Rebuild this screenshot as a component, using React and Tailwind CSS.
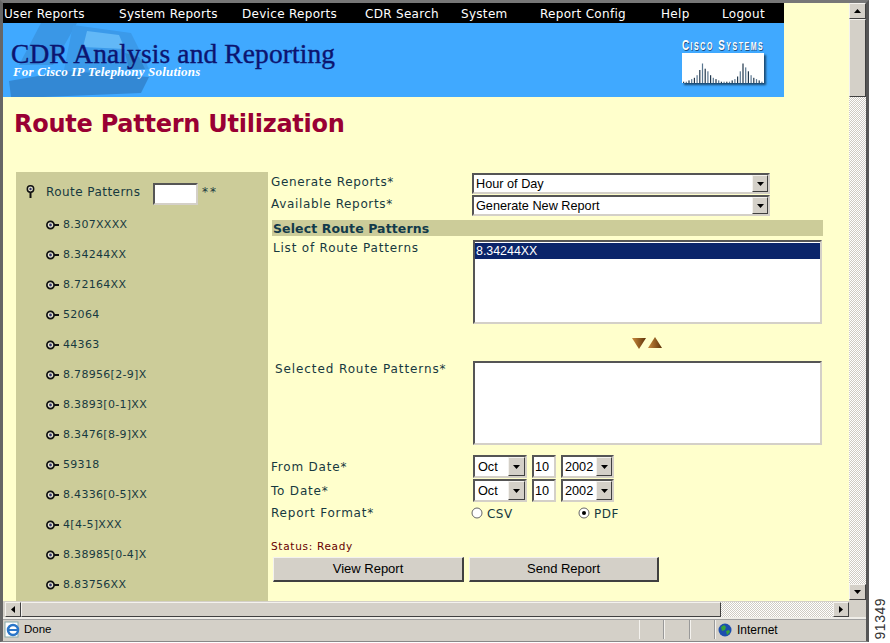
import React from "react";

const navItems = [
  ["User Reports", "w-[115px]"],
  ["System Reports", "w-[123px]"],
  ["Device Reports", "w-[123px]"],
  ["CDR Search", "w-[96px]"],
  ["System", "w-[79px]"],
  ["Report Config", "w-[121px]"],
  ["Help", "w-[61px]"],
  ["Logout", "w-[62px]"],
];

const patterns = ["8.307XXXX","8.34244XX","8.72164XX","52064","44363","8.78956[2-9]X","8.3893[0-1]XX","8.3476[8-9]XX","59318","8.4336[0-5]XX","4[4-5]XXX","8.38985[0-4]X","8.83756XX"];

const verdana = "font-['DejaVu_Sans',sans-serif]";
const arial = "font-['Liberation_Sans',Arial,sans-serif]";
const edge = "border border-t-[#f4f2ee] border-l-[#f4f2ee] border-r-[#404040] border-b-[#404040]";
const sunken = "border-2 border-t-[#555] border-l-[#555] border-r-[#d4d0c8] border-b-[#d4d0c8]";
const dither = "bg-[repeating-conic-gradient(#cfcbc3_0_25%,#ffffff_0_50%)] bg-[length:2px_2px]";

function Tri({ dir = "down", size = 7 }) {
  const pts = { down: "0,0 7,0 3.5,4", up: "0,4 7,4 3.5,0", left: "4,0 4,7 0,3.5", right: "0,0 0,7 4,3.5" }[dir];
  const box = dir === "left" || dir === "right" ? "0 0 4 7" : "0 0 7 4";
  const w = dir === "left" || dir === "right" ? 4 : size;
  const h = dir === "left" || dir === "right" ? size : 4;
  return <svg width={w} height={h} viewBox={box}><polygon points={pts} fill="#000" /></svg>;
}

function WinBtn({ dir, className = "" }) {
  return (
    <div className={`${edge} bg-[#d4d0c8] flex items-center justify-center shrink-0 ${className}`}>
      <Tri dir={dir} />
    </div>
  );
}

function Select({ value, className = "", btn = "w-[16px]" }) {
  return (
    <div className={`${sunken} bg-white flex items-stretch ${className}`}>
      <div className={`flex-1 ${arial} text-[12.7px] leading-none text-black pl-[2px] pt-[2px] flex items-center`}>{value}</div>
      <WinBtn dir="down" className={btn} />
    </div>
  );
}

function KeyIcon() {
  return (
    <svg width="13" height="10" viewBox="0 0 13 10" className="shrink-0">
      <circle cx="4.5" cy="5" r="3.6" fill="#e8e8d0" stroke="#111" strokeWidth="1.7" />
      <circle cx="4.5" cy="5" r="1.4" fill="#333366" />
      <rect x="8" y="4" width="5" height="2" fill="#111" />
    </svg>
  );
}

function Label({ children, className = "", track = "tracking-[0.8px]" }) {
  return <div className={`${verdana} text-[12px] leading-[14px] ${track} text-[#17393f] whitespace-nowrap ${className}`}>{children}</div>;
}

function Phone() {
  return (
    <svg className="absolute left-0 top-0" width="160" height="74" viewBox="0 0 160 74">
      <polygon points="38,0 74,0 50,42 16,42" fill="#3a97e6" />
      <polygon points="70,2 128,10 146,46 60,52" fill="#3b9aea" />
      <polygon points="84,8 116,12 122,26 80,24" fill="#62b8f7" />
      <polygon points="6,58 64,48 146,54 138,70 40,74 8,74" fill="#3388d4" />
      <polygon points="122,30 136,34 142,46 126,46" fill="#3086cf" />
    </svg>
  );
}

function CiscoLogo() {
  const bars = [1,1,2,3,4,6,10,15,11,9,6,4,3,2,1,1,1,1,2,3,5,9,15,12,9,6,4,3,2,1];
  return (
    <div className="flex flex-col items-start w-[84px]">
      <div className={`${arial} font-bold text-[14px] leading-[13px] text-white tracking-[2.2px] whitespace-nowrap h-[13px] origin-left scale-x-[0.7] [font-variant:small-caps] [text-shadow:1px_1px_0_#1a4f80]`}>Cisco Systems</div>
      <div className="w-[82px] h-[30px] bg-white shadow-[2px_2px_2px_#1b4a72] mt-[1px] flex items-end justify-center">
        <svg width="80" height="20" viewBox="0 0 80 20">
          {bars.map((b, i) => (
            <rect key={i} x={i * 2.7} y={20 - b * 1.3} width="1.2" height={b * 1.3} fill={i % 2 ? "#5a7790" : "#22384d"} />
          ))}
        </svg>
      </div>
    </div>
  );
}

function Sidebar() {
  return (
    <div className="w-[252px] h-[429px] bg-[#cccc99] overflow-hidden shrink-0 pl-[10px] pt-[11px]">
      <div className="flex items-start h-[24px]">
        <svg width="9" height="13" viewBox="0 0 9 13" className="mt-[2px] shrink-0">
          <circle cx="4.5" cy="4" r="3.2" fill="#e8e8d0" stroke="#111" strokeWidth="1.5" />
          <circle cx="4.5" cy="4" r="1.2" fill="#333366" />
          <rect x="3.5" y="7" width="2" height="6" fill="#111" />
        </svg>
        <Label className="ml-[11px] mt-[2px] w-[107px]" track="tracking-[0.45px]">Route Patterns</Label>
        <div className={`${sunken} bg-white w-[45px] h-[22px] shrink-0`} />
        <Label className="ml-[4px] mt-[2px]" track="tracking-[2px]">**</Label>
      </div>
      <div className="flex flex-col mt-[3px] pl-[20px]">
        {patterns.map((p) => (
          <div key={p} className="flex items-center h-[30px] gap-[4px] shrink-0">
            <KeyIcon />
            <div className={`${verdana} text-[11px] leading-[14px] tracking-[0.3px] text-[#17393f] whitespace-nowrap`}>{p}</div>
          </div>
        ))}
      </div>
    </div>
  );
}

function Form() {
  return (
    <div className="flex flex-col pl-[3px] w-[560px] shrink-0">
      <div className="flex h-[23px] mt-[1px]">
        <Label className="w-[201px] mt-[2px]" track="tracking-[0.65px]">Generate Reports*</Label>
        <Select value="Hour of Day" className="w-[298px] h-[21px]" />
      </div>
      <div className="flex h-[23px] -mt-[1px]">
        <Label className="w-[201px] mt-[2px]" track="tracking-[0.65px]">Available Reports*</Label>
        <Select value="Generate New Report" className="w-[298px] h-[21px]" />
      </div>
      <div className={`h-[16px] ml-[1px] mt-[2px] bg-[#cccc99] ${verdana} font-bold text-[12.5px] leading-[17px] tracking-[0.1px] text-[#123a4a] pl-[1px] w-[551px]`}>Select Route Patterns</div>
      <div className="flex h-[84px] mt-[4px]">
        <Label className="w-[200px] ml-[2px] mt-[1px]">List of Route Patterns</Label>
        <div className={`${sunken} bg-white w-[349px] h-[84px] pt-[1px]`}>
          <div className={`bg-[#0a246a] text-white ${arial} text-[12.4px] leading-[16px] h-[16px] pl-[1px]`}>8.34244XX</div>
        </div>
      </div>
      <div className="flex h-[37px] items-start pl-[361px] pt-[13px] gap-[2px]">
        <svg width="14" height="12" viewBox="0 0 14 12"><defs><linearGradient id="d" x1="0" x2="1"><stop offset="0" stopColor="#c98a3c" /><stop offset="1" stopColor="#5e3208" /></linearGradient></defs><polygon points="0,1 14,1 7,12" fill="url(#d)" /></svg>
        <svg width="14" height="12" viewBox="0 0 14 12"><polygon points="0,11 14,11 7,0" fill="url(#d)" /></svg>
      </div>
      <div className="flex h-[84px]">
        <Label className="w-[198px] ml-[4px] mt-[1px]" track="tracking-[0.9px]">Selected Route Patterns*</Label>
        <div className={`${sunken} bg-white w-[349px] h-[84px]`} />
      </div>
      <div className="flex h-[24px] mt-[10px]">
        <Label className="w-[202px] mt-[5px]">From Date*</Label>
        <DateSet />
      </div>
      <div className="flex h-[24px]">
        <Label className="w-[202px] mt-[5px]">To Date*</Label>
        <DateSet />
      </div>
      <div className="flex h-[24px] items-start">
        <Label className="w-[200px] mt-[3px]">Report Format*</Label>
        <div className="w-[107px] flex items-center mt-[4px]">
          <div className="-mt-[3px]"><Radio /></div>
          <Label className="ml-[4px]" track="tracking-[0.45px]">CSV</Label>
        </div>
        <div className="flex items-center mt-[4px]">
          <div className="-mt-[3px]"><Radio checked /></div>
          <Label className="ml-[4px]" track="tracking-[0.45px]">PDF</Label>
        </div>
      </div>
      <div className={`${verdana} text-[10.5px] leading-[13px] tracking-[0.7px] text-[#660000] mt-[13px] h-[13px]`}>Status: Ready</div>
      <div className="flex gap-[5px] ml-[2px] mt-[4px]">
        <Btn className="w-[191px]">View Report</Btn>
        <Btn className="w-[190px]">Send Report</Btn>
      </div>
    </div>
  );
}

function Btn({ children, className = "" }) {
  return (
    <div className={`${edge} border-b-2 border-r-2 bg-[#d4d0c8] h-[25px] flex items-center justify-center ${arial} text-[13px] text-black ${className}`}>{children}</div>
  );
}

function Radio({ checked }) {
  return (
    <svg width="12" height="12" viewBox="0 0 12 12" className="shrink-0">
      <circle cx="6" cy="6" r="5" fill="#fff" stroke="#666" />
      {checked && <circle cx="6" cy="6" r="2" fill="#000" />}
    </svg>
  );
}

function DateSet() {
  return (
    <div className="flex gap-[5px] h-[24px]">
      <Select value="Oct" className="w-[54px] h-[23px] pl-[1px]" btn="w-[17px]" />
      <div className={`${sunken} bg-white w-[24px] h-[23px] ${arial} text-[12.7px] flex items-center pl-[1px] pt-[2px]`}>10</div>
      <Select value="2002" className="w-[53px] h-[23px]" />
    </div>
  );
}

export default function App() {
  return (
    <div className="w-[890px] h-[643px] bg-white flex overflow-hidden">
      <div className="w-[869px] h-[642px] flex flex-col bg-[#d4d0c8] border-t-[3px] border-l-[3px] border-r-[3px] border-t-[#777] border-l-[#666] border-r-[#555] border-b border-b-[#888] shrink-0">
        <div className="flex h-[598px] shrink-0">
          <div className="w-[846px] bg-[#ffffcc] overflow-hidden flex flex-col">
            <nav className="w-[781px] h-[20px] bg-black flex items-center pl-[1px] shrink-0">
              {navItems.map(([t, w]) => (
                <div key={t} className={`${w} ${verdana} text-[12px] leading-[20px] pt-[1px] tracking-[0.3px] text-white whitespace-nowrap`}>{t}</div>
              ))}
            </nav>
            <header className="relative w-[781px] h-[74px] bg-[#40a9ff] shrink-0 flex justify-between overflow-hidden">
              <Phone />
              <div className="relative pl-[8px] pt-[19px]">
                <div className="font-['Liberation_Serif',serif] text-[27.4px] leading-[24px] tracking-[0.15px] text-[#0c1470] [-webkit-text-stroke:0.4px_#0c1470] whitespace-nowrap">CDR Analysis and Reporting</div>
                <div className="font-['Liberation_Serif',serif] font-bold italic text-[13px] leading-[12px] pl-[2px] tracking-[0.2px] text-white whitespace-nowrap">For Cisco IP Telephony Solutions</div>
              </div>
              <div className="relative pt-[16px] pr-[18px]"><CiscoLogo /></div>
            </header>
            <h1 className={`${verdana} font-bold text-[24px] leading-[30px] tracking-[-0.25px] text-[#990033] pl-[11px] pt-[12px] h-[75px] shrink-0 whitespace-nowrap`}>Route Pattern Utilization</h1>
            <div className="flex pl-[13px]">
              <Sidebar />
              <Form />
            </div>
          </div>
          <div className={`w-[17px] h-[597px] flex flex-col ${dither}`}>
            <WinBtn dir="up" className="h-[16px]" />
            <div className={`${edge} bg-[#d4d0c8] h-[78px]`} />
            <div className="flex-1" />
            <WinBtn dir="down" className="h-[16px]" />
          </div>
        </div>
        <div className="flex h-[15px] shrink-0 mt-[1px]">
          <WinBtn dir="left" className="w-[16px] ml-[2px]" />
          <div className={`${edge} bg-[#d4d0c8] w-[700px]`} />
          <div className={`w-[112px] ${dither}`} />
          <WinBtn dir="right" className="w-[16px]" />
        </div>
        <div className="h-[2px] shrink-0 bg-[#efede8]" />
        <div className="flex h-[20px] shrink-0 border-t border-[#a0a0a0]">
          <div className="w-[636px] flex items-center pl-[1px] gap-[2px]">
            <svg width="18" height="17" viewBox="0 0 18 17">
              <rect x="1" y="1" width="13" height="15" fill="#fff" stroke="#8aa" />
              <circle cx="9" cy="9" r="5" fill="none" stroke="#2a76c8" strokeWidth="2.5" />
              <path d="M5 9h8" stroke="#2a76c8" strokeWidth="2" />
            </svg>
            <div className={`${arial} text-[11.5px] text-black`}>Done</div>
          </div>
          <div className="w-[25px] border-l border-[#f4f2ee] border-r border-r-[#999]" />
          <div className="w-[26px] border-l border-[#f4f2ee] border-r border-r-[#999]" />
          <div className="w-[25px] border-l border-[#f4f2ee] border-r border-r-[#999]" />
          <div className="flex items-center flex-1 pl-[2px] gap-[5px] border-l border-[#f4f2ee]">
            <svg width="14" height="14" viewBox="0 0 14 14">
              <circle cx="7" cy="7" r="6.5" fill="#1c4fae" />
              <path d="M3 4l3-2 2 2-1 3-3 1zM8 8l3-1 1 2-3 3z" fill="#37a33a" />
            </svg>
            <div className={`${arial} text-[12px] text-black`}>Internet</div>
          </div>
        </div>
      </div>
      <div className="w-[21px] h-[643px] flex items-end justify-center pb-[4px]">
        <div className={`${arial} text-[14px] leading-[14px] tracking-[0.5px] text-[#333] [writing-mode:vertical-rl] rotate-180`}>91349</div>
      </div>
    </div>
  );
}
